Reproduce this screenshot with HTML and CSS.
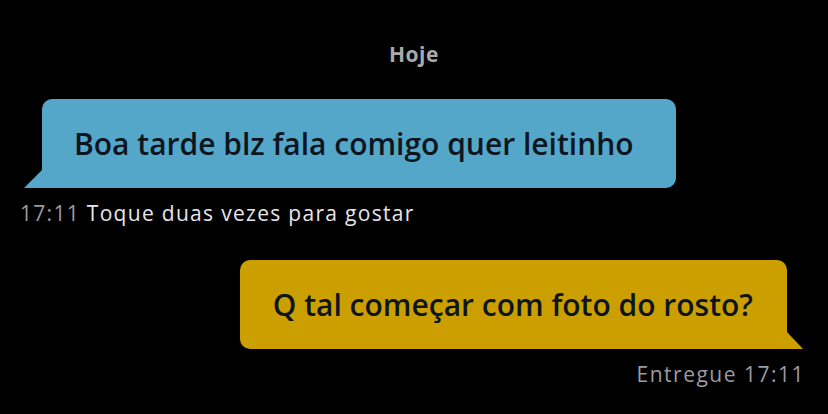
FILE: index.html
```html
<!DOCTYPE html>
<html lang="en">
<head>
    <meta charset="UTF-8">
    <title>Chat</title>
    <link rel="stylesheet" href="styles.css">
</head>
<body>
    <div class="chat">
        <div class="day">Hoje</div>

        <div class="msg incoming">
            <div class="bubble blue">Boa tarde blz fala comigo quer leitinho</div>
            <div class="meta"><span class="time">17:11</span> Toque duas vezes para gostar</div>
        </div>

        <div class="msg outgoing">
            <div class="bubble yellow">Q tal começar com foto do rosto?</div>
            <div class="meta"><span class="time">Entregue 17:11</span></div>
        </div>
    </div>
</body>
</html>
```

FILE: styles.css
```css
body {
    margin: 0;
    background: #000;
    font-family: 'Open Sans', 'Noto Sans', sans-serif;
    width: 828px;
    height: 414px;
    overflow: hidden;
}

.chat {
    display: flex;
    flex-direction: column;
    padding-top: 40px;
}

.day {
    text-align: center;
    color: #a9a9ad;
    font-weight: 700;
    font-size: 21px;
    line-height: 28px;
    letter-spacing: 0.5px;
    margin-bottom: 31px;
}

.msg {
    display: flex;
    flex-direction: column;
}

.incoming {
    align-items: flex-start;
    padding-left: 20px;
}

.outgoing {
    align-items: flex-end;
    padding-right: 25px;
    margin-top: 33px;
}

.bubble {
    position: relative;
    height: 89px;
    display: flex;
    align-items: center;
    font-size: 30px;
    font-weight: 550;
    color: #0d1620;
}

.bubble.blue {
    background: #55a7ca;
    margin-left: 22px;
    padding: 0 42px 0 32px;
    border-radius: 10px 10px 10px 0;
}

.bubble.yellow {
    background: #cc9f00;
    margin-right: 16px;
    padding: 0 34px 0 33px;
    border-radius: 10px 10px 0 10px;
}

.bubble::after {
    content: '';
    position: absolute;
    bottom: 0;
    width: 18px;
    height: 18px;
}

.bubble.blue::after {
    left: -18px;
    background: #55a7ca;
    clip-path: polygon(100% 0, 100% 100%, 0 100%);
}

.bubble.yellow::after {
    right: -16px;
    width: 16px;
    height: 17px;
    background: #cc9f00;
    clip-path: polygon(0 0, 100% 100%, 0 100%);
}

.meta {
    font-size: 21px;
    line-height: 28px;
    letter-spacing: 1.3px;
    color: #e6e6e8;
    margin-top: 11px;
}

.outgoing .meta {
    margin-right: -2px;
    letter-spacing: 1.5px;
}

.meta .time {
    color: #9b9ba0;
}
```
